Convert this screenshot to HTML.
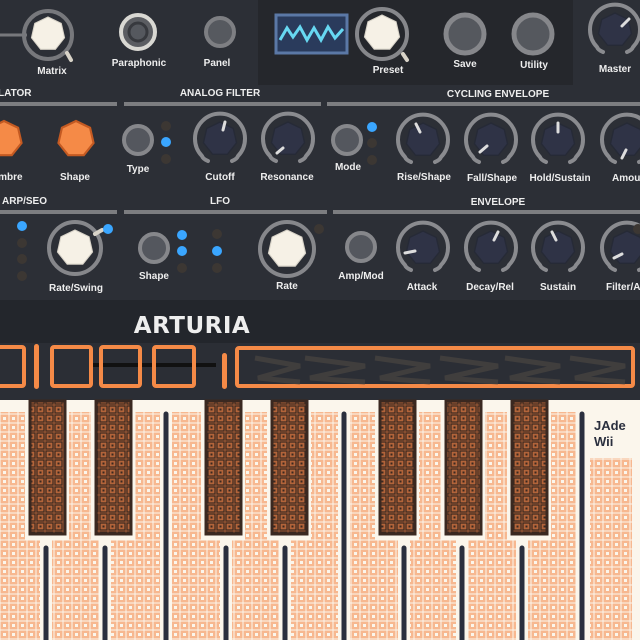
<!DOCTYPE html>
<html><head><meta charset="utf-8"><style>
html,body{margin:0;padding:0;background:#2c2f36;width:640px;height:640px;overflow:hidden}
svg{display:block}
text{font-family:"Liberation Sans","DejaVu Sans",sans-serif;font-weight:bold;fill:#eeeeee}
</style></head><body>
<svg width="640" height="640" viewBox="0 0 640 640" xmlns="http://www.w3.org/2000/svg">
<defs>
<polygon id="hep" points="0,-1 0.782,-0.623 0.975,0.223 0.434,0.901 -0.434,0.901 -0.975,0.223 -0.782,-0.623"/>
<pattern id="peach" width="9" height="9" patternUnits="userSpaceOnUse">
<rect width="9" height="9" fill="#fbf6ec"/>
<rect x="0.5" y="0.5" width="8" height="8" fill="#f7b890"/>
<rect x="3" y="3" width="3" height="3" fill="#fbf6ec"/>
</pattern>
<pattern id="brown" width="9" height="9" patternUnits="userSpaceOnUse">
<rect width="9" height="9" fill="#b2643a"/>
<rect x="1" y="1" width="7" height="7" fill="none" stroke="#3a2820" stroke-width="1.2"/>
<rect x="3.5" y="3.5" width="2" height="2" fill="#3a2820"/>
</pattern>
<g id="oknob">
<path d="M-12 22 Q-17 20 -18 17 A25 25 0 1 1 18 17 Q17 20 12 22" fill="none" stroke="#8a8b8f" stroke-width="4" stroke-linecap="round"/>
<use href="#hep" transform="scale(17)" fill="#2f3346" stroke="#262a36" stroke-width="0.08"/>
</g>
<g id="btn"><circle r="14" fill="#54575e" stroke="#86878b" stroke-width="4"/></g>
</defs>

<rect width="640" height="300" fill="#2c2f36"/>
<rect x="258" y="0" width="315" height="85" fill="#25272c"/>

<line x1="0" y1="35" x2="27" y2="35" stroke="#77787c" stroke-width="3"/>
<circle cx="48" cy="35" r="24" fill="none" stroke="#77787c" stroke-width="4"/>
<use href="#hep" transform="translate(48,34) scale(17)" fill="#f6f1e6" stroke="#d8d3c8" stroke-width="0.06"/>
<line x1="67" y1="53" x2="71" y2="60" stroke="#d8d3c8" stroke-width="4" stroke-linecap="round"/>
<text x="52" y="74" font-size="10" text-anchor="middle">Matrix</text>
<circle cx="138" cy="32" r="17" fill="#5b5d62" stroke="#d9d8d3" stroke-width="4"/>
<circle cx="138" cy="32" r="9" fill="#55585e" stroke="#37393e" stroke-width="3"/>
<text x="139" y="66" font-size="10" text-anchor="middle">Paraphonic</text>
<circle cx="220" cy="32" r="14" fill="#56595f" stroke="#7e7f83" stroke-width="4"/>
<text x="217" y="66" font-size="10" text-anchor="middle">Panel</text>
<rect x="276" y="15" width="71" height="38" fill="#2a3b5c" stroke="#5b78a6" stroke-width="3"/>
<polyline points="280,40 287,28 293,37 300,27 307,40 314,28 321,40 328,27 335,38 343,29" fill="none" stroke="#67d8f2" stroke-width="3"/>
<circle cx="382" cy="34" r="25" fill="none" stroke="#86878b" stroke-width="4"/>
<use href="#hep" transform="translate(382,33) scale(18)" fill="#f6f1e6" stroke="#d8d3c8" stroke-width="0.06"/>
<line x1="403" y1="54" x2="407" y2="60" stroke="#d8d3c8" stroke-width="4" stroke-linecap="round"/>
<text x="388" y="73" font-size="10" text-anchor="middle">Preset</text>
<circle cx="465" cy="34" r="19" fill="#55585e" stroke="#86878b" stroke-width="5"/>
<text x="465" y="67" font-size="10" text-anchor="middle">Save</text>
<circle cx="533" cy="34" r="19" fill="#55585e" stroke="#86878b" stroke-width="5"/>
<text x="534" y="68" font-size="10" text-anchor="middle">Utility</text>
<use href="#oknob" x="615" y="30"/>
<line x1="622" y1="26" x2="629" y2="19" stroke="#ddd" stroke-width="3" stroke-linecap="round"/>
<text x="615" y="72" font-size="10" text-anchor="middle">Master</text>

<text x="-2" y="96" font-size="10">LATOR</text>
<text x="220" y="96" font-size="10" text-anchor="middle">ANALOG FILTER</text>
<text x="498" y="97" font-size="10" text-anchor="middle">CYCLING ENVELOPE</text>
<rect x="0" y="102" width="117" height="4" fill="#7c7d80"/>
<rect x="124" y="102" width="197" height="4" fill="#7c7d80"/>
<rect x="327" y="102" width="313" height="4" fill="#7c7d80"/>

<use href="#hep" transform="translate(4,139) scale(18)" fill="#f58a47" stroke="#c45a22" stroke-width="0.12"/>
<use href="#hep" transform="translate(76,139) scale(18)" fill="#f58a47" stroke="#c45a22" stroke-width="0.12"/>
<text x="6" y="180" font-size="10" text-anchor="middle">Timbre</text>
<text x="75" y="180" font-size="10" text-anchor="middle">Shape</text>
<use href="#btn" x="138" y="140"/>
<text x="138" y="172" font-size="10" text-anchor="middle">Type</text>
<circle cx="166" cy="126" r="5" fill="#3c3733"/><circle cx="166" cy="142" r="5" fill="#3aa6ff"/><circle cx="166" cy="159" r="5" fill="#3c3733"/>
<use href="#oknob" x="220" y="139"/>
<line x1="225" y1="122" x2="223" y2="130" stroke="#ddd" stroke-width="3" stroke-linecap="round"/>
<text x="220" y="180" font-size="10" text-anchor="middle">Cutoff</text>
<use href="#oknob" x="288" y="139"/>
<line x1="277" y1="153" x2="283" y2="148" stroke="#ddd" stroke-width="3" stroke-linecap="round"/>
<text x="287" y="180" font-size="10" text-anchor="middle">Resonance</text>
<use href="#btn" x="347" y="140"/>
<text x="348" y="170" font-size="10" text-anchor="middle">Mode</text>
<circle cx="372" cy="127" r="5" fill="#3aa6ff"/><circle cx="372" cy="143" r="5" fill="#3c3733"/><circle cx="372" cy="160" r="5" fill="#3c3733"/>
<use href="#oknob" x="423" y="140"/>
<line x1="416" y1="124" x2="420" y2="132" stroke="#ddd" stroke-width="3" stroke-linecap="round"/>
<text x="424" y="180" font-size="10" text-anchor="middle">Rise/Shape</text>
<use href="#oknob" x="491" y="140"/>
<line x1="480" y1="152" x2="487" y2="146" stroke="#ddd" stroke-width="3" stroke-linecap="round"/>
<text x="492" y="181" font-size="10" text-anchor="middle">Fall/Shape</text>
<use href="#oknob" x="558" y="140"/>
<line x1="558" y1="123" x2="558" y2="132" stroke="#ddd" stroke-width="3" stroke-linecap="round"/>
<text x="560" y="181" font-size="10" text-anchor="middle">Hold/Sustain</text>
<use href="#oknob" x="627" y="140"/>
<line x1="622" y1="158" x2="626" y2="150" stroke="#ddd" stroke-width="3" stroke-linecap="round"/>
<text x="612" y="181" font-size="10">Amount</text>

<text x="2" y="204" font-size="10">ARP/SEO</text>
<text x="220" y="204" font-size="10" text-anchor="middle">LFO</text>
<text x="498" y="205" font-size="10" text-anchor="middle">ENVELOPE</text>
<rect x="0" y="210" width="117" height="4" fill="#7c7d80"/>
<rect x="124" y="210" width="203" height="4" fill="#7c7d80"/>
<rect x="333" y="210" width="307" height="4" fill="#7c7d80"/>

<circle cx="22" cy="226" r="5" fill="#3aa6ff"/><circle cx="22" cy="243" r="5" fill="#3c3733"/><circle cx="22" cy="259" r="5" fill="#3c3733"/><circle cx="22" cy="276" r="5" fill="#3c3733"/>
<circle cx="75" cy="248" r="26" fill="none" stroke="#86878b" stroke-width="4"/>
<use href="#hep" transform="translate(75,248) scale(18)" fill="#f6f1e6" stroke="#d8d3c8" stroke-width="0.06"/>
<line x1="95" y1="234" x2="102" y2="230" stroke="#d8d3c8" stroke-width="4" stroke-linecap="round"/>
<circle cx="108" cy="229" r="5" fill="#3aa6ff"/>
<text x="76" y="291" font-size="10" text-anchor="middle">Rate/Swing</text>
<use href="#btn" x="154" y="248"/>
<text x="154" y="279" font-size="10" text-anchor="middle">Shape</text>
<circle cx="182" cy="235" r="5" fill="#3aa6ff"/><circle cx="182" cy="251" r="5" fill="#3aa6ff"/><circle cx="182" cy="268" r="5" fill="#3c3733"/>
<circle cx="217" cy="234" r="5" fill="#3c3733"/><circle cx="217" cy="251" r="5" fill="#3aa6ff"/><circle cx="217" cy="268" r="5" fill="#3c3733"/>
<circle cx="287" cy="249" r="27" fill="none" stroke="#86878b" stroke-width="4"/>
<use href="#hep" transform="translate(287,249) scale(19)" fill="#f6f1e6" stroke="#d8d3c8" stroke-width="0.06"/>
<circle cx="319" cy="229" r="5" fill="#3c3733"/>
<text x="287" y="289" font-size="10" text-anchor="middle">Rate</text>
<use href="#btn" x="361" y="247"/>
<text x="361" y="279" font-size="10" text-anchor="middle">Amp/Mod</text>
<use href="#oknob" x="423" y="248"/>
<line x1="405" y1="253" x2="415" y2="251" stroke="#ddd" stroke-width="3" stroke-linecap="round"/>
<text x="422" y="290" font-size="10" text-anchor="middle">Attack</text>
<use href="#oknob" x="491" y="248"/>
<line x1="498" y1="232" x2="494" y2="240" stroke="#ddd" stroke-width="3" stroke-linecap="round"/>
<text x="490" y="290" font-size="10" text-anchor="middle">Decay/Rel</text>
<use href="#oknob" x="558" y="248"/>
<line x1="552" y1="232" x2="556" y2="240" stroke="#ddd" stroke-width="3" stroke-linecap="round"/>
<text x="558" y="290" font-size="10" text-anchor="middle">Sustain</text>
<use href="#oknob" x="627" y="248"/>
<line x1="614" y1="258" x2="622" y2="254" stroke="#ddd" stroke-width="3" stroke-linecap="round"/>
<text x="606" y="290" font-size="10">Filter/Amp</text>
<circle cx="638" cy="229" r="5" fill="#3c3733"/>

<rect x="0" y="300" width="640" height="43" fill="#23262c"/>
<text x="192" y="333" font-size="23" text-anchor="middle" fill="#f1ede4" style="font-family:'DejaVu Sans',sans-serif;letter-spacing:0.5px">ARTURIA</text>
<rect x="0" y="343" width="640" height="57" fill="#2b2e35"/>
<line x1="92" y1="365" x2="216" y2="365" stroke="#111" stroke-width="4"/>
<g fill="none" stroke="#f58a47" stroke-width="4">
<rect x="-6" y="347" width="30" height="39" rx="2"/>
<rect x="52" y="347" width="39" height="39" rx="2"/>
<rect x="101" y="347" width="39" height="39" rx="2"/>
<rect x="154" y="347" width="40" height="39" rx="2"/>
<rect x="237" y="348" width="396" height="38" rx="2"/>
</g>
<rect x="34" y="344" width="5" height="45" rx="2.5" fill="#f58a47"/>
<rect x="222" y="353" width="5" height="36" rx="2.5" fill="#f58a47"/>
<g fill="none" stroke="#4a4541" stroke-width="5" opacity="0.7">
<polyline points="255,358 300,366 258,378 300,382"/>
<polyline points="305,358 365,366 310,378 365,382"/>
<polyline points="375,358 430,366 380,378 430,382"/>
<polyline points="440,358 498,366 445,378 498,382"/>
<polyline points="505,358 560,366 510,378 560,382"/>
<polyline points="570,358 625,366 575,378 625,382"/>
</g>

<rect x="0" y="400" width="640" height="240" fill="#fbf6ec"/>
<rect x="0" y="412" width="640" height="228" fill="url(#peach)"/>
<g fill="#fbf6ec">
<rect x="25" y="400" width="44" height="140"/>
<rect x="91" y="400" width="44" height="140"/>
<rect x="201" y="400" width="44" height="140"/>
<rect x="267" y="400" width="44" height="140"/>
<rect x="375" y="400" width="44" height="140"/>
<rect x="441" y="400" width="44" height="140"/>
<rect x="507" y="400" width="44" height="140"/>
<rect x="160" y="400" width="12" height="240"/>
<rect x="338" y="400" width="12" height="240"/>
<rect x="576" y="400" width="64" height="58"/>
<rect x="576" y="400" width="14" height="240"/>
<rect x="632" y="400" width="8" height="240"/>
<rect x="40" y="540" width="12" height="100"/>
<rect x="99" y="540" width="12" height="100"/>
<rect x="220" y="540" width="12" height="100"/>
<rect x="279" y="540" width="12" height="100"/>
<rect x="398" y="540" width="12" height="100"/>
<rect x="456" y="540" width="12" height="100"/>
<rect x="516" y="540" width="12" height="100"/>
</g>
<g stroke="#3a2820" stroke-width="3" fill="url(#brown)">
<rect x="30" y="401" width="35" height="133"/>
<rect x="96" y="401" width="35" height="133"/>
<rect x="206" y="401" width="35" height="133"/>
<rect x="272" y="401" width="35" height="133"/>
<rect x="380" y="401" width="35" height="133"/>
<rect x="446" y="401" width="35" height="133"/>
<rect x="512" y="401" width="35" height="133"/>
</g>
<g stroke="#2a2f3e" stroke-width="5" stroke-linecap="round">
<line x1="46" y1="548" x2="46" y2="645"/>
<line x1="105" y1="548" x2="105" y2="645"/>
<line x1="226" y1="548" x2="226" y2="645"/>
<line x1="285" y1="548" x2="285" y2="645"/>
<line x1="404" y1="548" x2="404" y2="645"/>
<line x1="462" y1="548" x2="462" y2="645"/>
<line x1="522" y1="548" x2="522" y2="645"/>
<line x1="166" y1="414" x2="166" y2="645"/>
<line x1="344" y1="414" x2="344" y2="645"/>
<line x1="582" y1="414" x2="582" y2="645"/>
</g>
<text x="594" y="430" font-size="13" style="fill:#2a2f3e">JAde</text>
<text x="594" y="446" font-size="13" style="fill:#2a2f3e">Wii</text>
</svg>
</body></html>
